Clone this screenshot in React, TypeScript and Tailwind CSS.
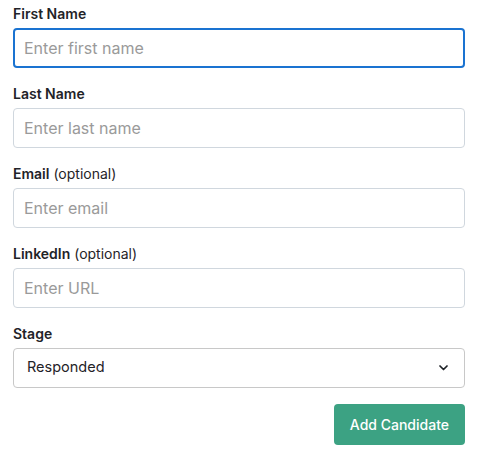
import React, { useState } from 'react';

const inputClass =
  'block w-full h-10 rounded-[4px] border border-[#d0d7de] bg-white pl-[10px] pr-3 text-[16px] text-[#1f2328] placeholder:text-[#9a9a9a] outline-none focus:border-2 focus:border-[#1a73d1] focus:pl-[9px]';

function Field({
  label,
  optional,
  placeholder,
  autoFocus,
}: {
  label: string;
  optional?: boolean;
  placeholder: string;
  autoFocus?: boolean;
}) {
  return (
    <div className="flex flex-col gap-1">
      <label className="text-[14px] leading-5 text-[#1f2328]">
        <span className="font-semibold">{label}</span>
        {optional && <span className="font-normal"> (optional)</span>}
      </label>
      <input className={inputClass} placeholder={placeholder} autoFocus={autoFocus} />
    </div>
  );
}

export default function App() {
  const [stage, setStage] = useState('Responded');

  return (
    <div
      className="min-h-screen bg-white"
      style={{ fontFamily: 'Inter, "Noto Sans", sans-serif' }}
    >
      <form
        className="ml-[13px] w-[452px] pt-1 flex flex-col gap-4"
        onSubmit={(e) => e.preventDefault()}
      >
        <Field label="First Name" placeholder="Enter first name" autoFocus />
        <Field label="Last Name" placeholder="Enter last name" />
        <Field label="Email" optional placeholder="Enter email" />
        <Field label="LinkedIn" optional placeholder="Enter URL" />

        <div className="flex flex-col gap-1">
          <label className="text-[14px] leading-5 font-semibold text-[#1f2328]">Stage</label>
          <div className="relative">
            <select
              value={stage}
              onChange={(e) => setStage(e.target.value)}
              className="block w-full h-10 appearance-none rounded-[4px] border border-[#c8c8c8] bg-white pl-[13px] pr-8 pb-[3px] text-[14.5px] text-[#1f2328] outline-none"
            >
              <option>Contacted</option>
              <option>Responded</option>
              <option>Interviewing</option>
              <option>Hired</option>
            </select>
            <svg
              className="pointer-events-none absolute right-[17px] top-1/2 -translate-y-1/2"
              width="9"
              height="6"
              viewBox="0 0 9 6"
              fill="none"
            >
              <path d="M1 1l3.5 3.5L8 1" stroke="#1f2328" strokeWidth="1.7" strokeLinecap="round" strokeLinejoin="round" />
            </svg>
          </div>
        </div>

        <div className="flex justify-end">
          <button
            type="submit"
            className="h-[41px] rounded-[4px] bg-[#3ca283] px-4 text-[14px] font-medium text-white"
          >
            Add Candidate
          </button>
        </div>
      </form>
    </div>
  );
}
